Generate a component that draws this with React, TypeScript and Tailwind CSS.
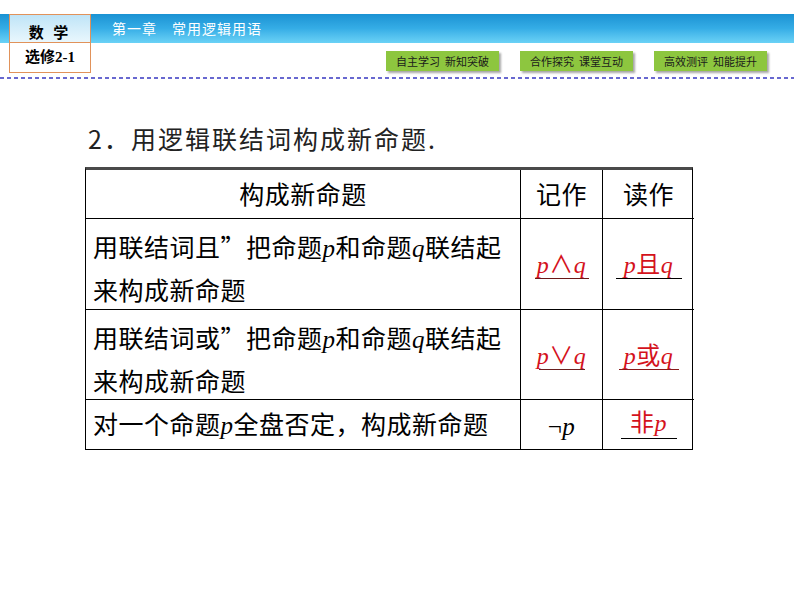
import React from "react";

const RED = "text-[#d4121c]";

function Var({ children, red }: { children: React.ReactNode; red?: boolean }) {
  return (
    <span
      className={`italic font-['Liberation_Serif',serif] ${red ? RED : "text-black"}`}
    >
      {children}
    </span>
  );
}

function Answer({
  children,
  line,
  width,
  lift = 0,
}: {
  children: React.ReactNode;
  line: string;
  width: string;
  lift?: number;
}) {
  return (
    <div className="flex flex-col items-center">
      <div className={`${RED} leading-[26px] text-[24px] font-['Liberation_Serif','Noto_Sans_CJK_SC',serif]`}>
        {children}
      </div>
      <div className={`h-[1.5px] ${width} ${line}`} style={{ marginTop: lift }} />
    </div>
  );
}

const navItems = ["自主学习  新知突破", "合作探究  课堂互动", "高效测评  知能提升"];

export default function App() {
  return (
    <div className="w-[794px] h-[596px] bg-white overflow-hidden font-['Noto_Sans_CJK_SC',sans-serif] text-black">
      {/* header */}
      <div className="pt-[14px]">
        <div className="relative">
          <div className="h-[29px] bg-gradient-to-b from-[#1a92d3] via-[#35ade6] to-[#6ad2f6] flex items-center pl-[112px]">
            <span className="text-white text-[14px] font-['Noto_Sans_CJK_SC',serif] tracking-[1px]">
              第一章　常用逻辑用语
            </span>
          </div>
          <div className="absolute left-[9px] top-0 w-[82px] h-[59px] border-[1.5px] border-[#e1925a] flex flex-col bg-white">
            <div className="h-[28px] bg-gradient-to-b from-[#bfe4f7] to-[#e9f7fd] border-b-[1.5px] border-[#e1925a] flex items-end justify-center pb-[3px]">
              <span className="text-[15px] font-bold leading-none tracking-[3px]">数 学</span>
            </div>
            <div className="flex-1 flex items-center justify-center">
              <span className="text-[15px] font-bold leading-none font-['Liberation_Serif','Noto_Sans_CJK_SC',serif]">
                选修2-1
              </span>
            </div>
          </div>
        </div>

        <div className="flex justify-end gap-[21px] pr-[27px] mt-[8px] h-[20px]">
          {navItems.map((t) => (
            <div
              key={t}
              className="w-[113px] h-[20px] bg-[#8dc63f] shadow-[2px_2px_2px_rgba(0,0,0,0.35)] flex items-center justify-center text-[11px] text-[#1b1b1b] whitespace-pre"
            >
              {t}
            </div>
          ))}
        </div>

        <div className="mt-[6px] h-[2px] bg-[repeating-linear-gradient(90deg,#6868d0_0_4px,transparent_4px_7px)]" />
      </div>

      {/* title */}
      <div className="pl-[88px] mt-[44px] text-[25px] leading-[30px] text-[#222] tracking-[2px]">
        2．用逻辑联结词构成新命题.
      </div>

      {/* table */}
      <div className="ml-[85px] mt-[14px] w-[608px] grid grid-cols-[435px_82px_91px] border-l-[1.5px] border-r-[1.5px] border-b-[1.5px] border-t-[3px] border-black border-t-[#4a4a4a] text-[25px] tracking-[0.5px]">
        {/* header row */}
        <div className="h-[48px] flex items-center justify-center border-r-[1.5px] border-black">构成新命题</div>
        <div className="h-[48px] flex items-center justify-center border-r-[1.5px] border-black">记作</div>
        <div className="h-[48px] flex items-center justify-center">读作</div>

        {/* row 2 */}
        <div className="h-[91px] border-t-[1.5px] border-r-[1.5px] border-black pl-[7px] pt-[7px] leading-[40px] whitespace-nowrap">
          用联结词且”把命题<Var>p</Var>和命题<Var>q</Var>联结起
          <br />
          来构成新命题
        </div>
        <div className="h-[91px] border-t-[1.5px] border-r-[1.5px] border-black flex items-center justify-center pt-[3px]">
          <Answer line="bg-[#6a1818]" width="w-[54px]">
            <span className="italic">p</span>∧<span className="italic">q</span>
          </Answer>
        </div>
        <div className="h-[91px] border-t-[1.5px] border-black flex items-center justify-center pt-[3px]">
          <Answer line="bg-black" width="w-[66px]">
            <span className="italic">p</span>且<span className="italic">q</span>
          </Answer>
        </div>

        {/* row 3 */}
        <div className="h-[90px] border-t-[1.5px] border-r-[1.5px] border-black pl-[7px] pt-[7px] leading-[40px] whitespace-nowrap">
          用联结词或”把命题<Var>p</Var>和命题<Var>q</Var>联结起
          <br />
          来构成新命题
        </div>
        <div className="h-[90px] border-t-[1.5px] border-r-[1.5px] border-black flex items-center justify-center pt-[4px]">
          <Answer line="bg-[#6a2020]" width="w-[46px]">
            <span className="italic">p</span>∨<span className="italic">q</span>
          </Answer>
        </div>
        <div className="h-[90px] border-t-[1.5px] border-black flex items-center justify-center pt-[4px]">
          <Answer line="bg-[#8a1a1a]" width="w-[60px]">
            <span className="italic">p</span>或<span className="italic">q</span>
          </Answer>
        </div>

        {/* row 4 */}
        <div className="h-[50px] border-t-[1.5px] border-r-[1.5px] border-black pl-[7px] flex items-center whitespace-nowrap">
          <span>
            对一个命题<Var>p</Var>全盘否定，构成新命题
          </span>
        </div>
        <div className="h-[50px] border-t-[1.5px] border-r-[1.5px] border-black flex items-center justify-center pt-[4px] font-['Liberation_Serif',serif]">
          ¬<span className="italic">p</span>
        </div>
        <div className="h-[50px] border-t-[1.5px] border-black flex items-center justify-center">
          <Answer line="bg-black" width="w-[56px]" lift={2}>
            非<span className="italic">p</span>
          </Answer>
        </div>
      </div>
    </div>
  );
}
